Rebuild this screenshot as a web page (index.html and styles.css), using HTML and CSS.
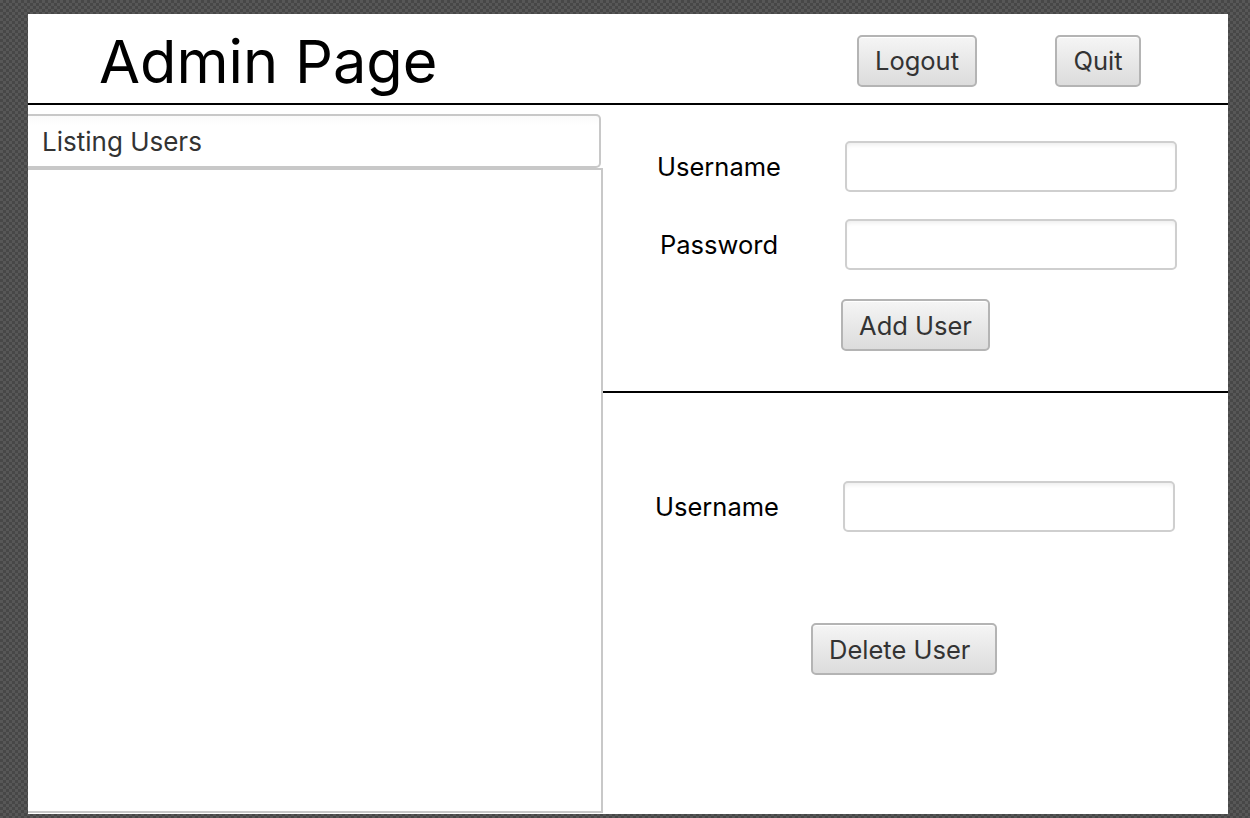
FILE: index.html
```html
<!DOCTYPE html>
<html>
<head>
<meta charset="utf-8">
<title>Admin Page</title>
<link rel="stylesheet" href="styles.css">
</head>
<body>
<div class="window">
  <header class="header">
    <h1 class="title">Admin Page</h1>
    <button class="btn btn-logout">Logout</button>
    <button class="btn btn-quit">Quit</button>
  </header>
  <main class="content">
    <section class="users">
      <div class="users-head">Listing Users</div>
      <div class="users-list"></div>
    </section>
    <section class="forms">
      <div class="form form-add">
        <div class="fields">
          <label class="field-label">Username</label>
          <input class="field-input" type="text">
          <label class="field-label">Password</label>
          <input class="field-input" type="password">
        </div>
        <button class="btn btn-add">Add User</button>
      </div>
      <div class="form form-delete">
        <div class="fields fields-delete">
          <label class="field-label">Username</label>
          <input class="field-input" type="text">
        </div>
        <button class="btn btn-delete">Delete User</button>
      </div>
    </section>
  </main>
</div>
</body>
</html>
```

FILE: styles.css
```css
html, body {
  margin: 0;
  padding: 0;
}
body {
  width: 1250px;
  height: 818px;
  overflow: hidden;
  background: repeating-conic-gradient(#474747 0 25%, #575757 0 50%) 0 0 / 6px 6px;
  font-family: Inter, "Noto Sans", sans-serif;
}
.window {
  margin: 14px 0 0 28px;
  width: 1200px;
  height: 800px;
  background: #fff;
  display: flex;
  flex-direction: column;
  overflow: hidden;
}
.header {
  border-bottom: 2px solid #000;
  display: flex;
  align-items: center;
  padding: 4px 0 0 71px;
  box-sizing: border-box;
  height: 91px;
}
.title {
  margin: 0 auto 0 0;
  font-size: 59.5px;
  font-weight: 400;
  color: #000;
}
.btn {
  font-family: Inter, "Noto Sans", sans-serif;
  font-size: 25.5px;
  color: #333;
  height: 52px;
  padding: 0 12px;
  box-sizing: border-box;
  border: 2px solid #b4b4b4;
  border-radius: 5px;
  background: linear-gradient(#f5f5f5, #dcdcdc);
  box-shadow: inset 0 1px 0 #fff;
}
.btn-logout {
  width: 120px;
  margin-right: 78px;
}
.btn-quit {
  width: 86px;
  margin-right: 87px;
}
.content {
  flex: 1;
  display: flex;
}
.users {
  width: 575px;
  display: flex;
  flex-direction: column;
  padding-top: 9px;
  box-sizing: border-box;
}
.users-head {
  width: 573px;
  height: 54px;
  box-sizing: border-box;
  border: 2px solid #c8c8c8;
  border-left: none;
  border-radius: 0 5px 5px 0;
  padding-left: 14px;
  display: flex;
  align-items: center;
  font-size: 26px;
  color: #333;
  background: linear-gradient(#fafafa, #fff 20%);
}
.users-list {
  flex: 1;
  border: 2px solid #c8c8c8;
  border-left: none;
  margin-bottom: 1px;
}
.forms {
  flex: 1;
  display: flex;
  flex-direction: column;
}
.form-add {
  height: 288px;
  box-sizing: border-box;
  border-bottom: 2px solid #000;
  padding: 36px 0 0 0;
}
.fields {
  display: grid;
  grid-template-columns: 178px 332px;
  grid-auto-rows: 51px;
  column-gap: 37px;
  row-gap: 27px;
  padding-left: 27px;
  align-items: center;
}
.fields-delete {
  padding-left: 25px;
}
.field-label {
  text-align: center;
  font-size: 25.5px;
  color: #000;
}
.field-input {
  height: 51px;
  width: 332px;
  box-sizing: border-box;
  border: 2px solid #cfcfcf;
  border-radius: 5px;
  background: #fff;
  box-shadow: inset 0 4px 4px -2px rgba(0, 0, 0, 0.07);
  outline: none;
  margin: 0;
}
.btn-add {
  display: block;
  margin: 29px auto 0;
  width: 149px;
}
.form-delete {
  flex: 1;
  padding-top: 88px;
}
.btn-delete {
  display: block;
  width: 186px;
  margin: 91px 0 0 208px;
  text-align: left;
  padding-left: 16px;
}
```
